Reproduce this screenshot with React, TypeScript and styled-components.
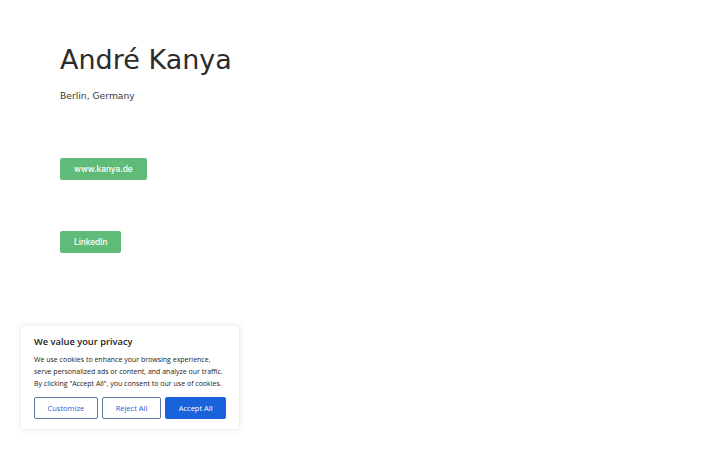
import React from "react";
import styled, { createGlobalStyle } from "styled-components";

const Global = createGlobalStyle`
  html, body { margin: 0; padding: 0; background: #ffffff; }
  body { font-family: "DejaVu Sans", sans-serif; }
`;

const Page = styled.main`
  width: 720px;
  height: 450px;
  box-sizing: border-box;
  padding: 42px 60px 0;
  display: flex;
  flex-direction: column;
  align-items: flex-start;
  position: relative;
  overflow: hidden;
`;

const Name = styled.h1`
  margin: 0;
  font-family: "DejaVu Sans", sans-serif;
  font-weight: 400;
  font-size: 27px;
  line-height: 36px;
  color: #2b2b2b;
`;

const Location = styled.p`
  margin: 11px 0 0;
  font-family: "DejaVu Sans", sans-serif;
  font-size: 9.2px;
  line-height: 14px;
  color: #3a3a3a;
`;

const LinkButton = styled.a<{ $top: number }>`
  margin-top: ${(p) => p.$top}px;
  display: inline-flex;
  align-items: center;
  justify-content: center;
  height: 22px;
  padding: 0 14px;
  background: #60bb78;
  border-radius: 2px;
  color: #ffffff;
  text-decoration: none;
  font-family: Inter, "Liberation Sans", sans-serif;
  font-weight: 500;
  font-size: 8.3px;
`;

const Banner = styled.section`
  position: absolute;
  left: 20px;
  top: 325px;
  width: 220px;
  box-sizing: border-box;
  padding: 9px 13px 10px;
  background: #ffffff;
  border: 1px solid #f1f1f1;
  border-radius: 3px;
  box-shadow: 0 0 6px rgba(0, 0, 0, 0.08);
  font-family: "Open Sans", "Noto Sans", sans-serif;
`;

const BannerTitle = styled.h2`
  margin: 0;
  font-size: 9.3px;
  line-height: 14px;
  font-weight: 600;
  color: #212121;
`;

const BannerText = styled.p`
  margin: 5px 0 0;
  font-size: 7px;
  line-height: 12px;
  color: #212121;
  white-space: nowrap;
`;

const Actions = styled.div`
  margin-top: 7px;
  display: flex;
  gap: 4px;
`;

const Choice = styled.button<{ $primary?: boolean; $w: number }>`
  width: ${(p) => p.$w}px;
  height: 22px;
  box-sizing: border-box;
  padding: 0;
  font-family: "Open Sans", "Noto Sans", sans-serif;
  font-size: 7.5px;
  font-weight: 400;
  border-radius: 2px;
  border: 1.5px solid ${(p) => (p.$primary ? "#1863dc" : "#5b7aa8")};
  background: ${(p) => (p.$primary ? "#1863dc" : "#ffffff")};
  color: ${(p) => (p.$primary ? "#ffffff" : "#1863dc")};
  cursor: pointer;
`;

export default function App() {
  return (
    <>
      <Global />
      <Page>
        <Name>André Kanya</Name>
        <Location>Berlin, Germany</Location>
        <LinkButton $top={55} href="#">www.kanya.de</LinkButton>
        <LinkButton $top={51} href="#">LinkedIn</LinkButton>
        <Banner>
          <BannerTitle>We value your privacy</BannerTitle>
          <BannerText>
            We use cookies to enhance your browsing experience,
            <br />
            serve personalized ads or content, and analyze our traffic.
            <br />
            By clicking "Accept All", you consent to our use of cookies.
          </BannerText>
          <Actions>
            <Choice $w={64}>Customize</Choice>
            <Choice $w={60}>Reject All</Choice>
            <Choice $w={61} $primary>Accept All</Choice>
          </Actions>
        </Banner>
      </Page>
    </>
  );
}
